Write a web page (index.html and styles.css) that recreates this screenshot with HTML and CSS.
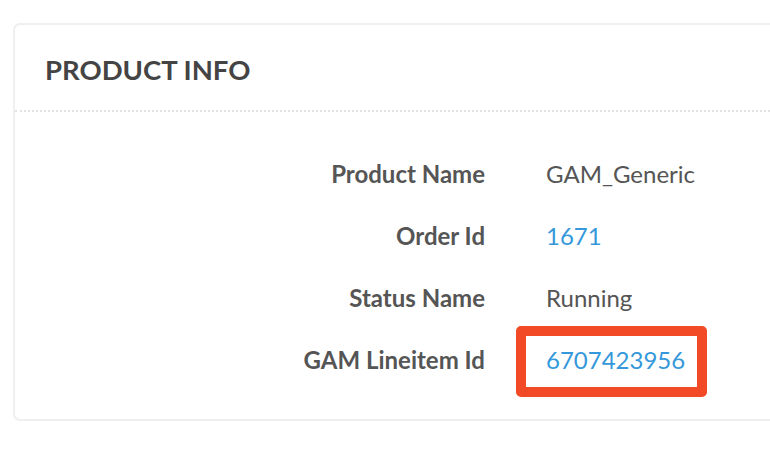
FILE: index.html
```html
<!DOCTYPE html>
<html>
<head>
<meta charset="utf-8">
<link rel="stylesheet" href="styles.css">
</head>
<body>
<div class="card">
  <div class="card-header">Product Info</div>
  <div class="card-body">
    <div class="info-grid">
      <div class="label">Product Name</div>
      <div class="value">GAM_Generic</div>
      <div class="label">Order Id</div>
      <div class="value"><a class="link">1671</a></div>
      <div class="label">Status Name</div>
      <div class="value">Running</div>
      <div class="label">GAM Lineitem Id</div>
      <div class="value"><a class="link highlight">6707423956</a></div>
    </div>
  </div>
</div>
</body>
</html>
```

FILE: styles.css
```css
html, body {
  margin: 0;
  padding: 0;
  background: #fff;
  overflow: hidden;
}
body {
  padding: 23px 0 0 13px;
  font-family: Lato, "Open Sans", sans-serif;
  color: #555;
}
.card {
  border: 2px solid #efefef;
  border-right: none;
  border-radius: 7px 0 0 7px;
  background: #fff;
}
.card-header {
  padding: 29px 0 24px 30px;
  font-size: 27.5px;
  line-height: 32px;
  font-weight: 700;
  text-transform: uppercase;
  color: #444;
  border-bottom: 2px dotted #e2e2e2;
}
.card-body {
  padding: 48px 0 45px 0;
}
.info-grid {
  display: grid;
  grid-template-columns: 470px 1fr;
  column-gap: 61px;
  row-gap: 34px;
  font-size: 24px;
  line-height: 28px;
}
.label {
  text-align: right;
  font-weight: 700;
  color: #555;
}
.value {
  color: #555;
}
.link {
  color: #3498db;
  text-decoration: none;
}
.highlight {
  position: relative;
}
.highlight::after {
  content: "";
  position: absolute;
  left: -30px;
  right: -22px;
  top: -19px;
  bottom: -23px;
  border: 10px solid #f24a26;
  border-radius: 5px;
}
```
